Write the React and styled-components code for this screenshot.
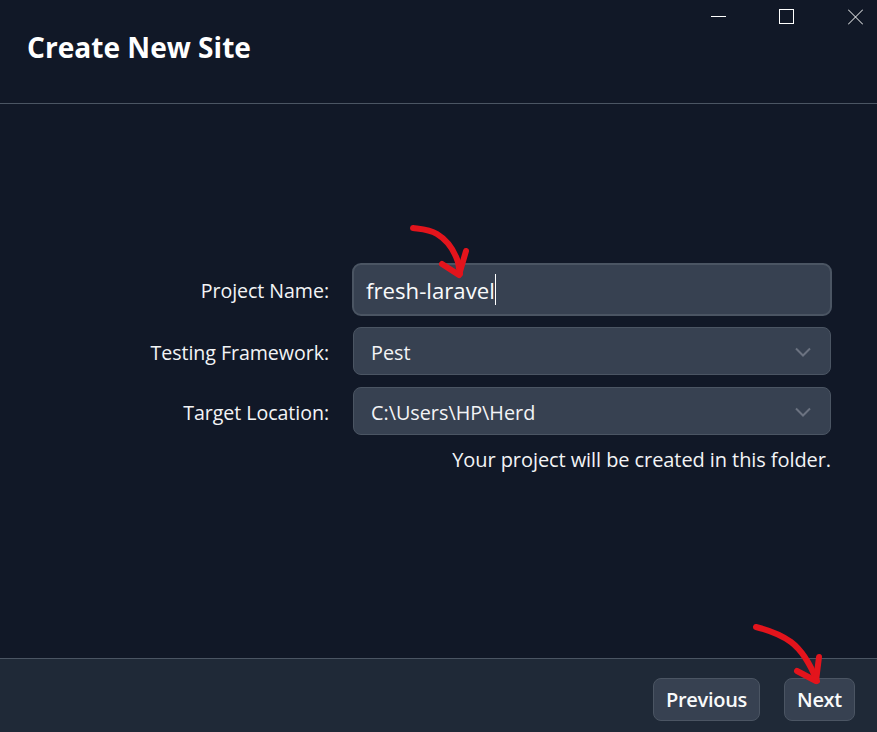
import styled, { createGlobalStyle } from "styled-components";

const GlobalStyle = createGlobalStyle`
  html, body {
    margin: 0;
    padding: 0;
    background: #111827;
  }
`;

const Window = styled.div`
  position: relative;
  width: 877px;
  height: 732px;
  display: flex;
  flex-direction: column;
  overflow: hidden;
  background: #111827;
  color: #f9fafb;
  font-family: "Open Sans", "Noto Sans", sans-serif;
`;

const Header = styled.header`
  height: 104px;
  box-sizing: border-box;
  display: flex;
  justify-content: space-between;
  align-items: flex-start;
  border-bottom: 1px solid #4b5563;
  padding: 0 14px 0 27px;
`;

const Title = styled.h1`
  margin: 29px 0 0;
  font-size: 28.1px;
  line-height: 36px;
  font-weight: 700;
  color: #fff;
`;

const WindowControls = styled.div`
  display: flex;
  gap: 53px;
  padding-top: 9px;
`;

const Main = styled.main`
  flex: 1;
  display: flex;
  flex-direction: column;
  padding: 159px 46px 0 0;
`;

const Row = styled.div`
  display: grid;
  grid-template-columns: 329px 1fr;
  column-gap: 24px;
  align-items: center;
  margin-bottom: ${(p) => p.$gap}px;
`;

const Label = styled.label`
  padding-top: 2px;
  text-align: right;
  font-size: 19.6px;
  letter-spacing: -0.05px;
  color: #f3f4f6;
`;

const TextInput = styled.div`
  height: 53px;
  margin: 0 -1px;
  box-sizing: border-box;
  display: flex;
  align-items: center;
  padding: 2px 0 0 12px;
  background: #374151;
  border: 2px solid #4b5563;
  border-radius: 9px;
  font-size: 22.2px;
  color: #f9fafb;
`;

const Caret = styled.span`
  display: inline-block;
  width: 1px;
  height: 31px;
  margin-top: -2px;
  background: #fff;
`;

const Select = styled.div`
  height: 48px;
  box-sizing: border-box;
  display: flex;
  align-items: center;
  justify-content: space-between;
  padding: 2px 19px 0 17px;
  background: #374151;
  border: 1px solid #4b5563;
  border-radius: 8px;
  font-size: 19.8px;
  color: #f3f4f6;
`;

const Hint = styled.p`
  margin: 0;
  text-align: right;
  font-size: 20px;
  line-height: 26px;
  letter-spacing: -0.08px;
  color: #f3f4f6;
`;

const Footer = styled.footer`
  height: 74px;
  box-sizing: border-box;
  display: flex;
  justify-content: flex-end;
  gap: 24px;
  padding: 19px 22px 0 0;
  background: #1f2937;
  border-top: 1px solid #4b5563;
`;

const Button = styled.button`
  width: ${(p) => p.$width}px;
  height: 43px;
  padding: 0;
  background: #374151;
  border: 1px solid #4b5563;
  border-radius: 8px;
  font-family: inherit;
  font-size: 20px;
  font-weight: 600;
  letter-spacing: -0.3px;
  color: #f9fafb;
`;

const Annotation = styled.svg`
  position: absolute;
  left: 0;
  top: 0;
  pointer-events: none;
`;

const Chevron = () => (
  <svg width="16" height="10" viewBox="0 0 16 10" fill="none" stroke="#6b7280" strokeWidth="2">
    <path d="M1 1.5l7 7 7-7" />
  </svg>
);

const MinimizeIcon = () => (
  <svg width="15" height="16" viewBox="0 0 15 16" fill="none" stroke="#fff" strokeWidth="1">
    <path d="M0 7.5h15" />
  </svg>
);

const MaximizeIcon = () => (
  <svg width="16" height="16" viewBox="0 0 16 16" fill="none" stroke="#fff" strokeWidth="1">
    <rect x="0.5" y="0.5" width="14" height="14" />
  </svg>
);

const CloseIcon = () => (
  <svg width="15" height="16" viewBox="0 0 15 16" fill="none" stroke="#fff" strokeWidth="1">
    <path d="M0 0.5l15 15M15 0.5l-15 15" />
  </svg>
);

const App = () => {
  return (
    <Window>
      <GlobalStyle />
      <Header>
        <Title>Create New Site</Title>
        <WindowControls>
          <MinimizeIcon />
          <MaximizeIcon />
          <CloseIcon />
        </WindowControls>
      </Header>
      <Main>
        <Row $gap={11}>
          <Label>Project Name:</Label>
          <TextInput>
            fresh-laravel
            <Caret />
          </TextInput>
        </Row>
        <Row $gap={12}>
          <Label>Testing Framework:</Label>
          <Select>
            Pest
            <Chevron />
          </Select>
        </Row>
        <Row $gap={12}>
          <Label>Target Location:</Label>
          <Select>
            C:\Users\HP\Herd
            <Chevron />
          </Select>
        </Row>
        <Hint>Your project will be created in this folder.</Hint>
      </Main>
      <Footer>
        <Button $width={107}>Previous</Button>
        <Button $width={71}>Next</Button>
      </Footer>
      <Annotation width="877" height="732" fill="none" stroke="#e3141c" strokeWidth="6" strokeLinecap="round" strokeLinejoin="round">
        <path d="M413 228c8 1 16 1 24 6 10 6 17 16 21 28l2 12" />
        <path d="M442 264l17 11 7-24" />
        <path d="M756 627c12 3 24 7 35 15 12 9 20 24 26 39" />
        <path d="M797 671l19 10 3-24" />
      </Annotation>
    </Window>
  );
};

export default App;
